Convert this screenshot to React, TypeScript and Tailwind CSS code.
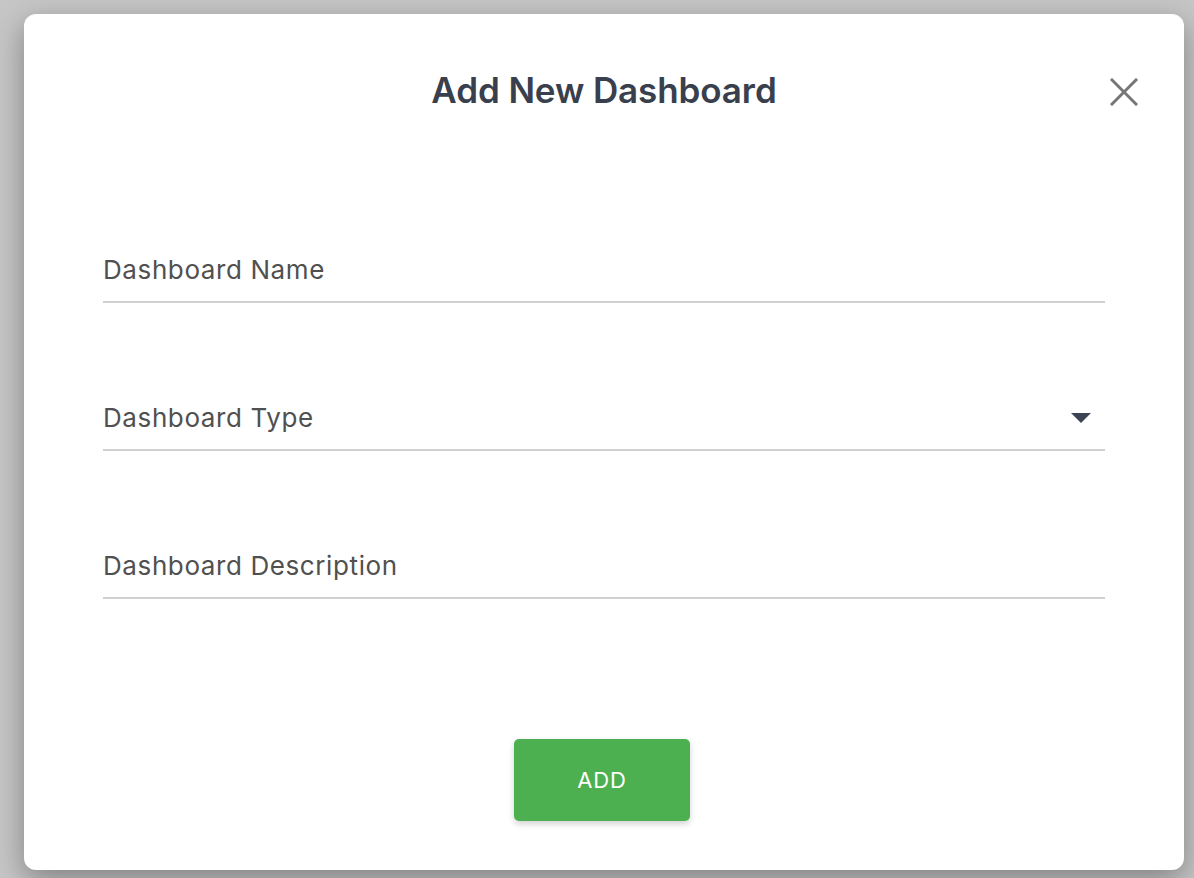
import React from 'react';

const fields = [
  { label: 'Dashboard Name', select: false },
  { label: 'Dashboard Type', select: true },
  { label: 'Dashboard Description', select: false },
];

export default function App() {
  return (
    <div
      className="h-[878px] w-full overflow-hidden bg-[#c6c6c6] pl-[24px] pt-[14px]"
      style={{ fontFamily: 'Inter, "Noto Sans", sans-serif' }}
    >
      <div className="relative flex h-[856px] w-[1160px] flex-col rounded-[12px] bg-white px-[79px] pt-[54px] shadow-[0_10px_30px_rgba(0,0,0,0.35)]">
        <h2 className="text-center text-[35px] font-semibold leading-[44px] tracking-[-0.1px] text-[#393f4d]">Add New Dashboard</h2>
        <button className="absolute right-[42px] top-[60px] flex h-[36px] w-[36px] items-center justify-center text-[#767676]">
          <svg width="28" height="28" viewBox="0 0 28 28" fill="none" stroke="currentColor" strokeWidth="3" strokeLinecap="square">
            <line x1="2" y1="2" x2="26" y2="26" />
            <line x1="26" y1="2" x2="2" y2="26" />
          </svg>
        </button>

        <div className="mt-[142px] flex flex-col gap-[99px]">
          {fields.map((f) => (
            <div key={f.label} className="flex items-center justify-between border-b-2 border-[#d0d0d0] pb-[15px]">
              <span className="text-[26px] leading-[32px] tracking-[0.6px] text-[#505050]">{f.label}</span>
              {f.select && (
                <svg width="20" height="10" viewBox="0 0 20 10" className="mr-[14px] text-[#3c4454]">
                  <path d="M0 0 L20 0 L10 10 Z" fill="currentColor" />
                </svg>
              )}
            </div>
          ))}
        </div>

        <div className="mt-[140px] flex justify-center pr-[4px]">
          <button className="h-[82px] w-[176px] rounded-[5px] bg-[#4caf50] text-[22px] font-normal tracking-[0.8px] text-white shadow-[0_3px_6px_rgba(0,0,0,0.18)]">
            ADD
          </button>
        </div>
      </div>
    </div>
  );
}
